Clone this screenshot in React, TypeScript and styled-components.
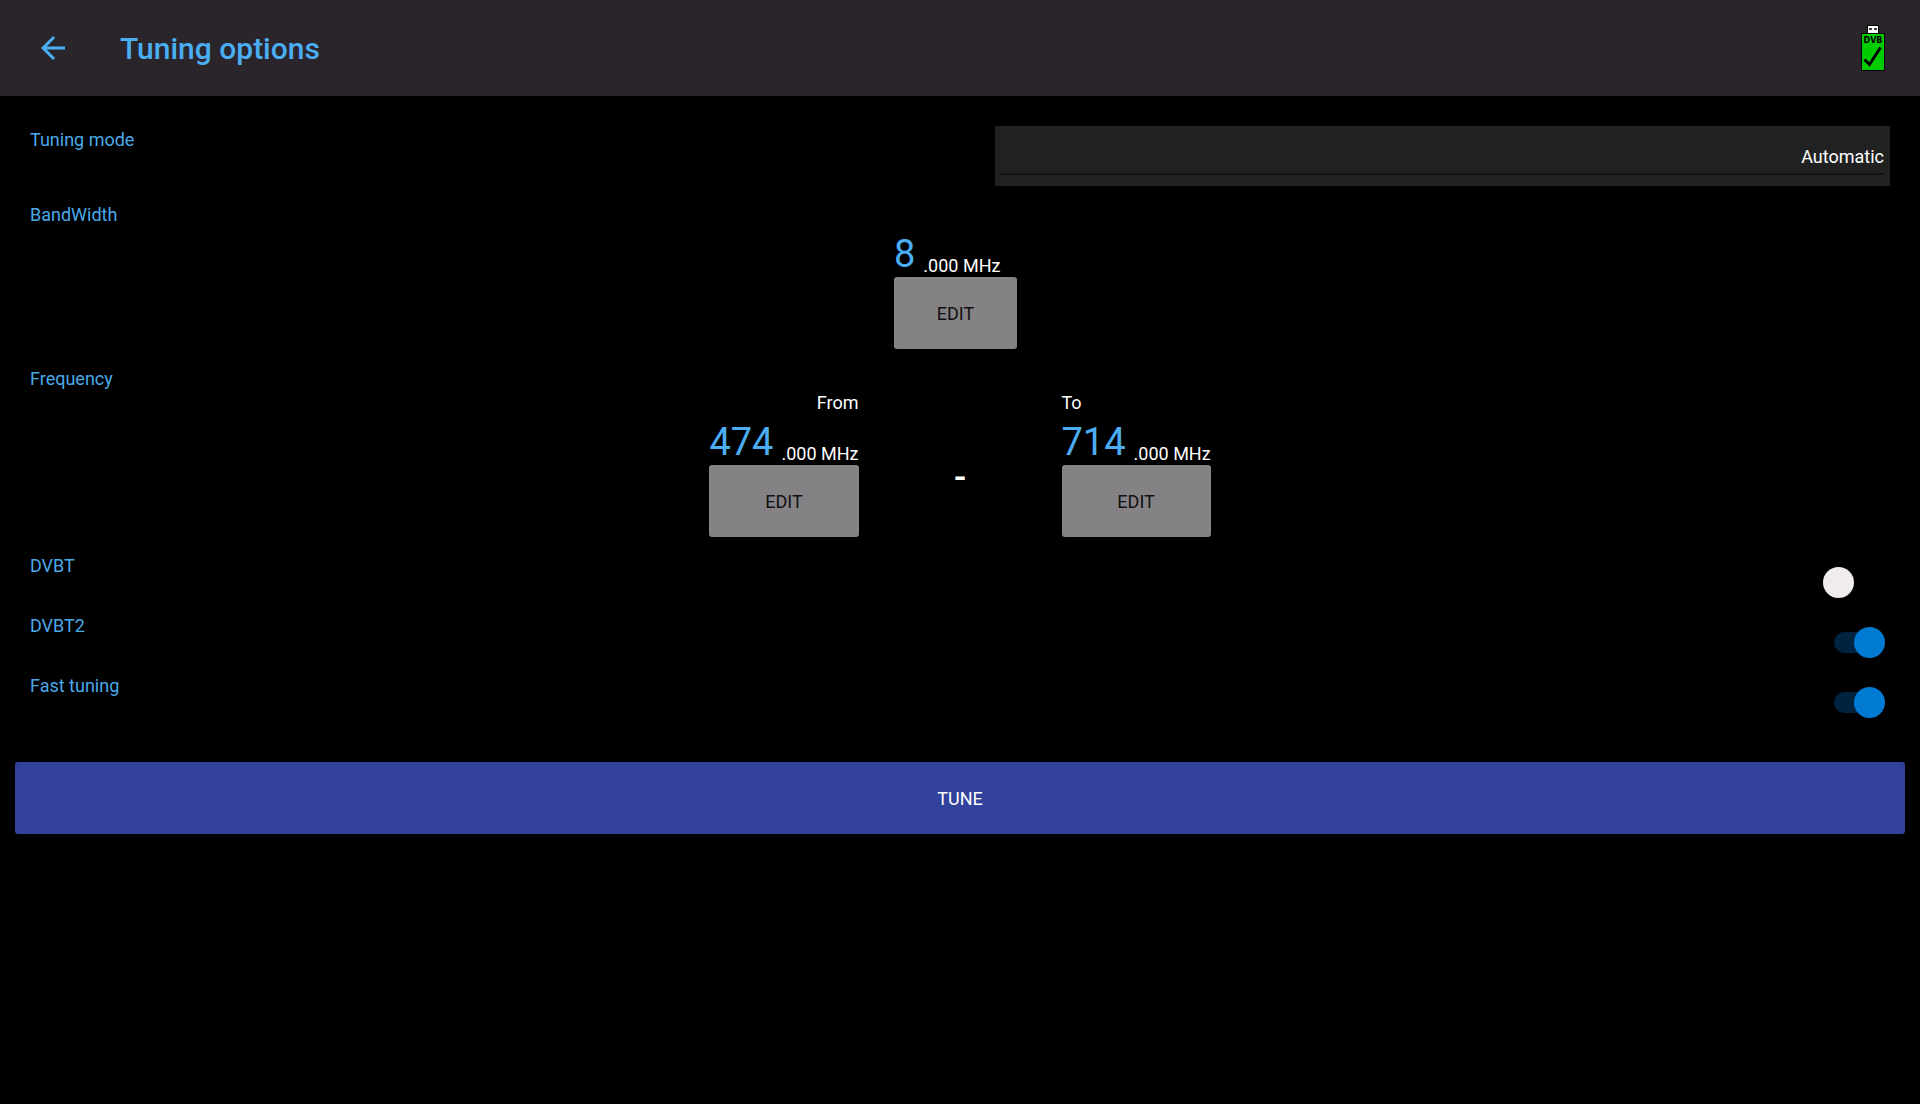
import React, { useState } from "react";
import styled, { createGlobalStyle } from "styled-components";

const GlobalStyle = createGlobalStyle`
  *, *::before, *::after { box-sizing: border-box; }
  body {
    margin: 0;
    background: #000;
    color: #fff;
    font-family: Roboto, "Liberation Sans", sans-serif;
    font-size: 18px;
    line-height: 24px;
  }
  button, select, input { font: inherit; margin: 0; }
`;

const Header = styled.header`
  display: flex;
  align-items: center;
  height: 96px;
  padding: 0 35px;
  background: #2a252b;
  color: #4badf2;
`;

const BackButton = styled.button`
  display: flex;
  padding: 0;
  border: 0;
  background: none;
  color: inherit;
  cursor: pointer;
`;

const Title = styled.h1`
  flex: 1;
  margin: 0 0 0 49px;
  padding-top: 2px;
  font-size: 30px;
  font-weight: 500;
  line-height: 36px;
`;

const Form = styled.form`
  padding: 30px 15px;
`;

const Fields = styled.div`
  display: flex;
  flex-direction: column;
  gap: 15px;
  padding: 0 15px;
`;

const ModeRow = styled.div`
  display: grid;
  grid-template-columns: 1fr 1fr;
  gap: 70px;
`;

const Group = styled.section`
  min-height: 149px;
`;

const FieldLabel = styled.label`
  display: block;
  padding-top: 2px;
  color: #4ba9e8;
`;

const SelectBox = styled.div`
  padding: 13px 6px 11px;
  background: #212121;
`;

const Select = styled.select`
  display: block;
  width: 100%;
  height: 36px;
  padding: 2px 0 0;
  border: 0;
  border-bottom: 2px solid #131313;
  border-radius: 0;
  background: transparent;
  color: #fff;
  appearance: none;
  text-align-last: right;

  option { background: #212121; }
`;

const Readouts = styled.div`
  display: flex;
  justify-content: center;
`;

const Readout = styled.div<{ $trailing?: boolean }>`
  display: flex;
  flex-direction: column;
  min-width: 123px;
  margin-right: ${(p) => (p.$trailing ? "9px" : "0")};
`;

const Caption = styled.div<{ $align: "left" | "right" }>`
  text-align: ${(p) => p.$align};
`;

const Value = styled.div`
  display: flex;
  align-items: flex-end;
  gap: 8px;
  height: 50px;
`;

const Whole = styled.span`
  align-self: flex-start;
  color: #4badf2;
  font-size: 38px;
  line-height: 54px;
`;

const Unit = styled.span`
  line-height: 22px;
`;

const Button = styled.button<{ $primary?: boolean }>`
  width: 100%;
  height: 72px;
  padding: 2px 0 0;
  border: 0;
  border-radius: 3px;
  background: ${(p) => (p.$primary ? "#32419b" : "#858285")};
  color: ${(p) => (p.$primary ? "#fff" : "#111")};
  text-transform: uppercase;
  cursor: pointer;
`;

const Dash = styled.div`
  display: flex;
  align-items: center;
  justify-content: center;
  width: 203px;
  padding-top: 28px;
  font-size: 36px;
  font-weight: 500;
`;

const SwitchRow = styled.div`
  display: flex;
  justify-content: space-between;
  height: 60px;
  padding-right: 5px;
`;

const Switch = styled.input`
  position: relative;
  align-self: center;
  width: 62px;
  height: 31px;
  appearance: none;
  cursor: pointer;

  &::before {
    content: "";
    position: absolute;
    inset: 5px 11px;
    border-radius: 11px;
    background: #000;
  }
  &::after {
    content: "";
    position: absolute;
    top: 0;
    left: 0;
    width: 31px;
    height: 31px;
    border-radius: 50%;
    background: #efebee;
  }
  &:checked::before { background: #002340; }
  &:checked::after { left: 31px; background: #007ad2; }
`;

const Actions = styled.div`
  padding-top: 30px;
`;

const ArrowBack = () => (
  <svg width="36" height="36" viewBox="0 0 24 24" fill="currentColor" aria-hidden="true">
    <path d="M20 11H7.83l5.59-5.59L12 4l-8 8 8 8 1.41-1.41L7.83 13H20v-2z" />
  </svg>
);

const DongleIcon = () => (
  <svg width="24" height="46" viewBox="0 0 24 46" role="img" aria-label="DVB receiver connected">
    <rect x="6.5" y="0.5" width="11" height="9" fill="#fff" stroke="#000" />
    <path d="M8 4h3M13 4h3" stroke="#000" strokeWidth="1.4" />
    <rect x="0.5" y="8.5" width="23" height="37" fill="#00cc00" stroke="#000" />
    <text x="12" y="18" textAnchor="middle" fontFamily="DejaVu Sans" fontWeight="700" fontSize="8">
      DVB
    </text>
    <path d="M3.5 34.5L8.5 39.5L19.5 22.5" fill="none" stroke="#000" strokeWidth="3" />
  </svg>
);

type FrequencyProps = {
  value: number;
  name: string;
  caption?: string;
  align?: "left" | "right";
  trailing?: boolean;
};

function Frequency({ value, name, caption, align = "left", trailing }: FrequencyProps) {
  return (
    <Readout $trailing={trailing}>
      {caption && <Caption $align={align}>{caption}</Caption>}
      <Value>
        <Whole>{value}</Whole>
        <Unit>.000 MHz</Unit>
      </Value>
      <Button type="button" aria-label={`Edit ${name}`}>Edit</Button>
    </Readout>
  );
}

function SwitchField({ id, label, initial }: { id: string; label: string; initial: boolean }) {
  const [on, setOn] = useState(initial);
  return (
    <SwitchRow>
      <FieldLabel htmlFor={id}>{label}</FieldLabel>
      <Switch id={id} type="checkbox" role="switch" checked={on} onChange={() => setOn(!on)} />
    </SwitchRow>
  );
}

export default function App() {
  return (
    <>
      <GlobalStyle />
      <Header>
        <BackButton type="button" aria-label="Back">
          <ArrowBack />
        </BackButton>
        <Title>Tuning options</Title>
        <DongleIcon />
      </Header>
      <Form onSubmit={(e) => e.preventDefault()}>
        <Fields>
          <ModeRow>
            <FieldLabel htmlFor="mode">Tuning mode</FieldLabel>
            <SelectBox>
              <Select id="mode" defaultValue="Automatic">
                <option>Automatic</option>
              </Select>
            </SelectBox>
          </ModeRow>
          <Group>
            <FieldLabel as="div">BandWidth</FieldLabel>
            <Readouts>
              <Frequency value={8} name="bandwidth" trailing />
            </Readouts>
          </Group>
          <Group>
            <FieldLabel as="div">Frequency</FieldLabel>
            <Readouts>
              <Frequency value={474} name="start frequency" caption="From" align="right" />
              <Dash>-</Dash>
              <Frequency value={714} name="end frequency" caption="To" />
            </Readouts>
          </Group>
          <div>
            <SwitchField id="dvbt" label="DVBT" initial={false} />
            <SwitchField id="dvbt2" label="DVBT2" initial />
            <SwitchField id="fast" label="Fast tuning" initial />
          </div>
        </Fields>
        <Actions>
          <Button type="submit" $primary>Tune</Button>
        </Actions>
      </Form>
    </>
  );
}
